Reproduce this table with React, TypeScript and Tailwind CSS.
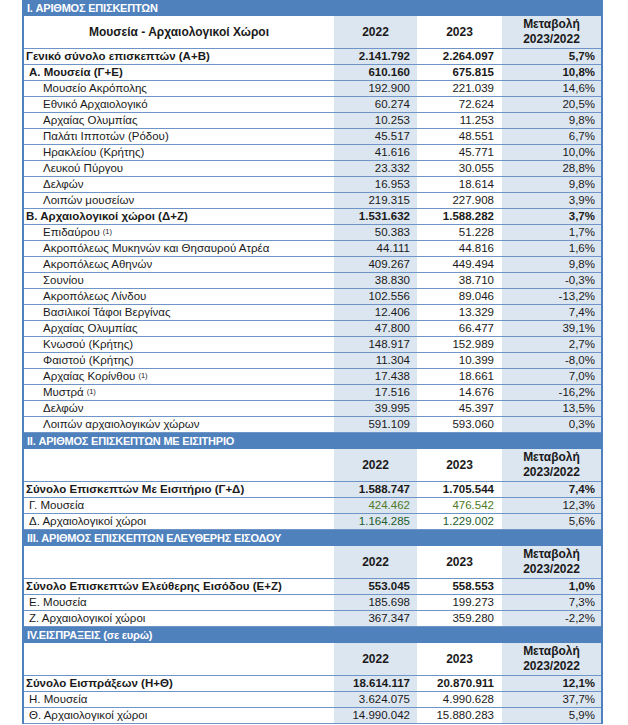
import React from 'react';

type Row = {
  label: string;
  a: string;
  b: string;
  c: string;
  kind?: 'total' | 'group' | 'item' | 'sub';
  note?: boolean;
  green?: string;
};

const cols = 'grid grid-cols-[310px_83px_85px_99px]';

const sections: { title: string; firstHeader?: boolean; rows: Row[] }[] = [
  {
    title: 'I. ΑΡΙΘΜΟΣ ΕΠΙΣΚΕΠΤΩΝ',
    firstHeader: true,
    rows: [
      { label: 'Γενικό σύνολο επισκεπτών (Α+Β)', a: '2.141.792', b: '2.264.097', c: '5,7%', kind: 'total' },
      { label: 'Α. Μουσεία (Γ+Ε)', a: '610.160', b: '675.815', c: '10,8%', kind: 'group' },
      { label: 'Μουσείο Ακρόπολης', a: '192.900', b: '221.039', c: '14,6%' },
      { label: 'Εθνικό Αρχαιολογικό', a: '60.274', b: '72.624', c: '20,5%' },
      { label: 'Αρχαίας Ολυμπίας', a: '10.253', b: '11.253', c: '9,8%' },
      { label: 'Παλάτι Ιπποτών (Ρόδου)', a: '45.517', b: '48.551', c: '6,7%' },
      { label: 'Ηρακλείου (Κρήτης)', a: '41.616', b: '45.771', c: '10,0%' },
      { label: 'Λευκού Πύργου', a: '23.332', b: '30.055', c: '28,8%' },
      { label: 'Δελφών', a: '16.953', b: '18.614', c: '9,8%' },
      { label: 'Λοιπών μουσείων', a: '219.315', b: '227.908', c: '3,9%' },
      { label: 'Β. Αρχαιολογικοί χώροι (Δ+Ζ)', a: '1.531.632', b: '1.588.282', c: '3,7%', kind: 'total' },
      { label: 'Επιδαύρου', a: '50.383', b: '51.228', c: '1,7%', note: true },
      { label: 'Ακροπόλεως Μυκηνών και Θησαυρού Ατρέα', a: '44.111', b: '44.816', c: '1,6%' },
      { label: 'Ακροπόλεως Αθηνών', a: '409.267', b: '449.494', c: '9,8%' },
      { label: 'Σουνίου', a: '38.830', b: '38.710', c: '-0,3%' },
      { label: 'Ακροπόλεως Λίνδου', a: '102.556', b: '89.046', c: '-13,2%' },
      { label: 'Βασιλικοί Τάφοι Βεργίνας', a: '12.406', b: '13.329', c: '7,4%' },
      { label: 'Αρχαίας Ολυμπίας', a: '47.800', b: '66.477', c: '39,1%' },
      { label: 'Κνωσού (Κρήτης)', a: '148.917', b: '152.989', c: '2,7%' },
      { label: 'Φαιστού (Κρήτης)', a: '11.304', b: '10.399', c: '-8,0%' },
      { label: 'Αρχαίας Κορίνθου', a: '17.438', b: '18.661', c: '7,0%', note: true },
      { label: 'Μυστρά', a: '17.516', b: '14.676', c: '-16,2%', note: true },
      { label: 'Δελφών', a: '39.995', b: '45.397', c: '13,5%' },
      { label: 'Λοιπών αρχαιολογικών χώρων', a: '591.109', b: '593.060', c: '0,3%' },
    ],
  },
  {
    title: 'II. ΑΡΙΘΜΟΣ ΕΠΙΣΚΕΠΤΩΝ ΜΕ ΕΙΣΙΤΗΡΙΟ',
    rows: [
      { label: 'Σύνολο Επισκεπτών Με Εισιτήριο (Γ+Δ)', a: '1.588.747', b: '1.705.544', c: '7,4%', kind: 'total' },
      { label: 'Γ. Μουσεία', a: '424.462', b: '476.542', c: '12,3%', kind: 'sub', green: 'text-[#4f7a28]' },
      { label: 'Δ. Αρχαιολογικοί χώροι', a: '1.164.285', b: '1.229.002', c: '5,6%', kind: 'sub', green: 'text-[#215c2a]' },
    ],
  },
  {
    title: 'III. ΑΡΙΘΜΟΣ ΕΠΙΣΚΕΠΤΩΝ ΕΛΕΥΘΕΡΗΣ ΕΙΣΟΔΟΥ',
    rows: [
      { label: 'Σύνολο Επισκεπτών Ελεύθερης Εισόδου (Ε+Ζ)', a: '553.045', b: '558.553', c: '1,0%', kind: 'total' },
      { label: 'Ε. Μουσεία', a: '185.698', b: '199.273', c: '7,3%', kind: 'sub' },
      { label: 'Ζ. Αρχαιολογικοί χώροι', a: '367.347', b: '359.280', c: '-2,2%', kind: 'sub' },
    ],
  },
  {
    title: 'IV.ΕΙΣΠΡΑΞΕΙΣ (σε ευρώ)',
    rows: [
      { label: 'Σύνολο Εισπράξεων (Η+Θ)', a: '18.614.117', b: '20.870.911', c: '12,1%', kind: 'total' },
      { label: 'Η. Μουσεία', a: '3.624.075', b: '4.990.628', c: '37,7%', kind: 'sub' },
      { label: 'Θ. Αρχαιολογικοί χώροι', a: '14.990.042', b: '15.880.283', c: '5,9%', kind: 'sub' },
    ],
  },
];

const DataRow = ({ r }: { r: Row }) => {
  const bold = r.kind === 'total' || r.kind === 'group';
  const pad = r.kind === 'total' ? 'pl-[2px]' : r.kind === 'group' || r.kind === 'sub' ? 'pl-[5px]' : 'pl-[19px]';
  const num = r.green ?? '';
  return (
    <div className={`${cols} h-4 border-b border-[#6f95c8] leading-[15px] ${bold ? 'font-bold' : ''}`}>
      <div className={`${pad} whitespace-nowrap`}>
        {r.label}
        {r.note && <sup className="text-[7.5px] ml-[3px] relative -top-[2px]">(1)</sup>}
      </div>
      <div className={`bg-[#dce6f1] text-right pr-[7px] ${num}`}>{r.a}</div>
      <div className={`text-right pr-[8px] ${num}`}>{r.b}</div>
      <div className="bg-[#dce6f1] text-right pr-[6px]">{r.c}</div>
    </div>
  );
};

const App = () => {
  return (
    <div className="w-[628px] h-[725px] overflow-hidden bg-white text-[11.5px] text-[#1a1a1a] font-['Liberation_Sans',Arial,sans-serif]">
      <div className="ml-[22px] w-[581px] border-x-2 border-[#4f81bd]">
        {sections.map((s) => (
          <div key={s.title}>
            <div className="h-4 bg-[#4f81bd] text-white font-bold text-[11px] leading-4 pl-[3px] tracking-[-0.2px] border-b border-[#4f81bd]">
              {s.title}
            </div>
            <div className={`${cols} h-[33px] border-b border-[#6f95c8] font-bold text-[12px]`}>
              <div className="flex items-center justify-center">
                {s.firstHeader ? 'Μουσεία - Αρχαιολογικοί Χώροι' : ''}
              </div>
              <div className="bg-[#dce6f1] flex items-center justify-center">2022</div>
              <div className="flex items-center justify-center">2023</div>
              <div className="bg-[#dce6f1] flex flex-col items-center justify-center leading-[15px]">
                <span>Μεταβολή</span>
                <span>2023/2022</span>
              </div>
            </div>
            {s.rows.map((r, i) => (
              <DataRow key={i} r={r} />
            ))}
          </div>
        ))}
      </div>
    </div>
  );
};

export default App;
